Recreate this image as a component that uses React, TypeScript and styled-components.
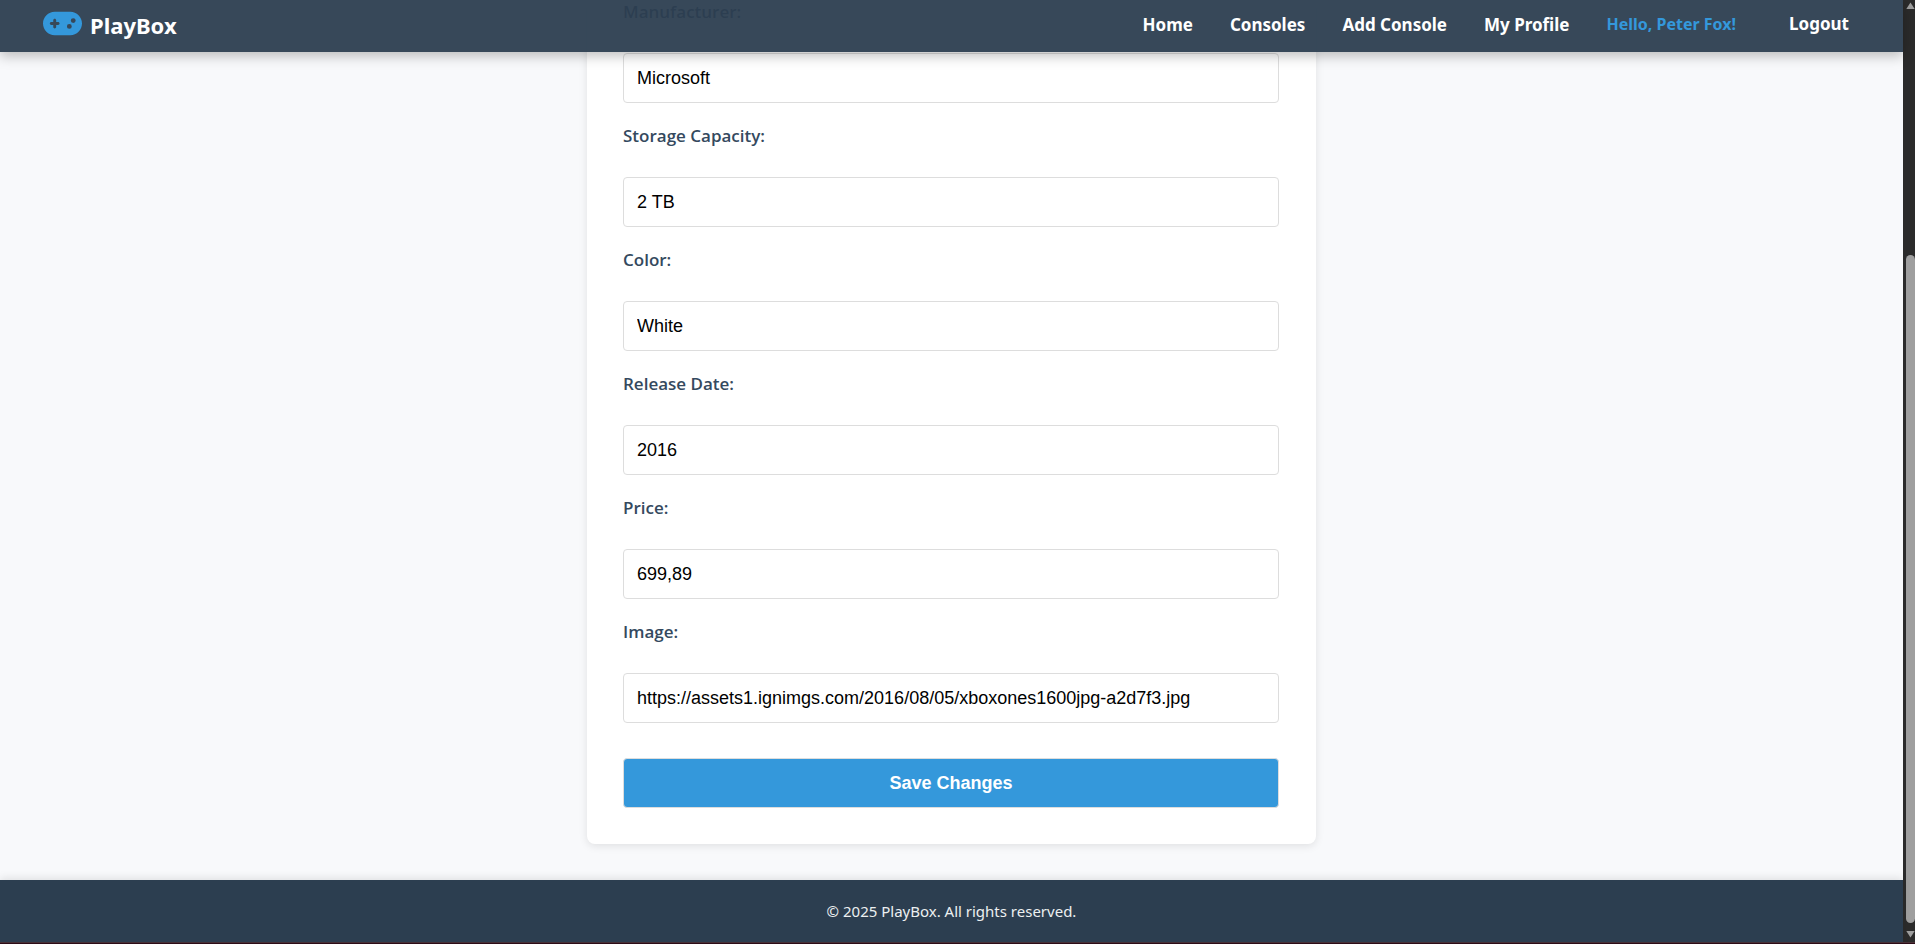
import React from "react";
import styled, { createGlobalStyle } from "styled-components";
import { FaGamepad } from "react-icons/fa6";

const GlobalStyle = createGlobalStyle`
  *, *::before, *::after { box-sizing: border-box; }
  body {
    margin: 0;
    background: #f8f9fb;
    color: #2c3e50;
    font-family: "Segoe UI", "Noto Sans", "Open Sans", sans-serif;
  }
`;

const Shell = styled.div`
  display: grid;
  grid-template-columns: minmax(0, 1fr) 12px;
  grid-template-rows: 1fr 2px;
  min-height: 100vh;
`;

const Page = styled.div`
  position: relative;
  display: flex;
  flex-direction: column;
`;

const Header = styled.header`
  position: absolute;
  inset: 0 0 auto;
  z-index: 1;
  display: flex;
  align-items: center;
  justify-content: space-between;
  height: 52px;
  padding: 0 54px 6px 43px;
  background: rgba(44, 62, 80, 0.95);
  box-shadow: 0 4px 12px rgba(0, 0, 0, 0.25);
`;

const Brand = styled.a`
  display: flex;
  align-items: center;
  gap: 8px;
  color: #fff;
  font-size: 22px;
  font-weight: 700;
  line-height: 28px;
  text-decoration: none;
  svg { color: #3498db; }
  span { padding-top: 4px; }
`;

const Nav = styled.nav`
  display: flex;
  align-items: center;
  gap: 37px;
  padding-top: 2px;
`;

const NavLink = styled.a`
  padding-top: 2px;
  color: #fff;
  font-size: 17px;
  font-weight: 700;
  line-height: 24px;
  text-decoration: none;
`;

const Greeting = styled.span`
  color: #3498db;
  font-size: 16px;
  font-weight: 700;
  line-height: 24px;
`;

const Logout = styled.button`
  margin-left: 16px;
  padding: 0;
  border: 0;
  background: none;
  color: #fff;
  font: inherit;
  font-size: 17px;
  font-weight: 700;
  line-height: 24px;
`;

const Card = styled.form`
  display: flex;
  flex-direction: column;
  width: 100%;
  max-width: 729px;
  margin: 0 auto 36px;
  padding: 0 37px 36px 36px;
  border-radius: 0 0 8px 8px;
  background: #fff;
  box-shadow: 0 2px 8px rgba(0, 0, 0, 0.1);
`;

const Field = styled.div`
  display: flex;
  flex-direction: column;
  gap: 29px;
  & + & { margin-top: 21px; }
`;

const Label = styled.label`
  color: #34495e;
  font-family: "Segoe UI", "Open Sans", sans-serif;
  font-size: 17px;
  font-weight: 600;
  line-height: 24px;
`;

const Input = styled.input`
  width: 100%;
  height: 50px;
  padding: 0 13px;
  border: 1px solid #ddd;
  border-radius: 4px;
  background: #fff;
  color: #000;
  font-family: Arial, "Liberation Sans", sans-serif;
  font-size: 18px;
`;

const SaveButton = styled.button`
  height: 50px;
  margin-top: 35px;
  border: 1px solid #ddd;
  border-radius: 4px;
  background: #3498db;
  color: #fff;
  font-family: Arial, "Liberation Sans", sans-serif;
  font-size: 18px;
  font-weight: 700;
`;

const Footer = styled.footer`
  flex: 1;
  display: flex;
  align-items: center;
  justify-content: center;
  min-height: 62px;
  background: #2c3e50;
  box-shadow: 0 -2px 8px rgba(0, 0, 0, 0.1);
  color: #ecf0f1;
  font-size: 15px;
  line-height: 24px;
`;

const ScrollTrack = styled.div`
  display: flex;
  flex-direction: column;
  gap: 7px;
  padding: 2px 0 4px 3px;
  background: #2b2b2b;
  svg { display: block; fill: #9f9f9f; }
`;

const ScrollSpace = styled.div`
  flex: 232;
`;

const ScrollThumb = styled.div`
  flex: 669;
  border-radius: 5px;
  background: #9f9f9f;
`;

const BottomEdge = styled.div`
  grid-column: 1 / -1;
  border-top: 1px solid #4a3339;
  background: #2e0d18;
`;

const links = ["Home", "Consoles", "Add Console", "My Profile"];

const fields = [
  { id: "manufacturer", label: "Manufacturer:", value: "Microsoft" },
  { id: "storage", label: "Storage Capacity:", value: "2 TB" },
  { id: "color", label: "Color:", value: "White" },
  { id: "released", label: "Release Date:", value: "2016" },
  { id: "price", label: "Price:", value: "699,89" },
  {
    id: "image",
    label: "Image:",
    value: "https://assets1.ignimgs.com/2016/08/05/xboxones1600jpg-a2d7f3.jpg",
  },
];

export default function App() {
  return (
    <>
      <GlobalStyle />
      <Shell>
        <Page>
          <Header>
            <Brand href="#">
              <FaGamepad size={39} />
              <span>PlayBox</span>
            </Brand>
            <Nav>
              {links.map((text) => (
                <NavLink key={text} href="#">{text}</NavLink>
              ))}
              <Greeting>Hello, Peter Fox!</Greeting>
              <Logout type="button">Logout</Logout>
            </Nav>
          </Header>
          <Card onSubmit={(event) => event.preventDefault()}>
            {fields.map((field) => (
              <Field key={field.id}>
                <Label htmlFor={field.id}>{field.label}</Label>
                <Input id={field.id} type="text" defaultValue={field.value} />
              </Field>
            ))}
            <SaveButton type="submit">Save Changes</SaveButton>
          </Card>
          <Footer>© 2025 PlayBox. All rights reserved.</Footer>
        </Page>
        <ScrollTrack aria-hidden="true">
          <svg width="9" height="8" viewBox="0 0 9 8">
            <path d="M4.5 0.5 L8.7 7 H0.3 Z" />
          </svg>
          <ScrollSpace />
          <ScrollThumb />
          <svg width="9" height="8" viewBox="0 0 9 8">
            <path d="M4.5 7.5 L8.7 1 H0.3 Z" />
          </svg>
        </ScrollTrack>
        <BottomEdge />
      </Shell>
    </>
  );
}
